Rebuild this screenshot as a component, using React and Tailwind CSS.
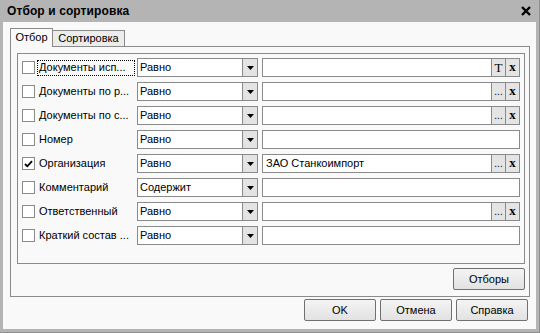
import React from 'react';

const rows = [
  { label: 'Документы исп...', op: 'Равно', buttons: ['T', 'x'], focus: true },
  { label: 'Документы по р...', op: 'Равно', buttons: ['...', 'x'] },
  { label: 'Документы по с...', op: 'Равно', buttons: ['...', 'x'] },
  { label: 'Номер', op: 'Равно' },
  { label: 'Организация', op: 'Равно', checked: true, value: 'ЗАО Станкоимпорт', buttons: ['...', 'x'] },
  { label: 'Комментарий', op: 'Содержит' },
  { label: 'Ответственный', op: 'Равно', buttons: ['...', 'x'] },
  { label: 'Краткий состав ...', op: 'Равно' },
];

function Checkbox({ checked }) {
  return (
    <div className="w-[13px] h-[13px] border border-[#8a8a8a] bg-white flex items-center justify-center shrink-0">
      {checked && (
        <svg width="9" height="8" viewBox="0 0 9 8">
          <path d="M1 4 L3.3 6.3 L8 1.2" fill="none" stroke="#000" strokeWidth="1.8" />
        </svg>
      )}
    </div>
  );
}

function FieldButton({ kind }) {
  if (kind === 'T') {
    return (
      <div className="w-[14px] h-full border-l border-[#8a8a8a] bg-[#e4e4e4] flex items-center justify-center font-['Liberation_Serif',serif] text-[13px] leading-none">
        T
      </div>
    );
  }
  if (kind === 'x') {
    return (
      <div className="w-[14px] h-full border-l border-[#8a8a8a] bg-[#e4e4e4] flex items-center justify-center font-['Liberation_Serif',serif] font-bold text-[13px] leading-none pb-[2px]">
        x
      </div>
    );
  }
  return (
    <div className="w-[14px] h-full border-l border-[#8a8a8a] bg-[#e4e4e4] flex items-end justify-center text-[10px] leading-none pb-[3px]">
      ...
    </div>
  );
}

function Row({ row }) {
  return (
    <div className="flex items-center h-[19px]">
      <Checkbox checked={row.checked} />
      <div
        className={`ml-[2px] w-[98px] h-[16px] flex items-center pl-[1px] whitespace-nowrap ${
          row.focus ? 'border border-dotted border-black' : 'border border-transparent'
        }`}
      >
        {row.label}
      </div>
      <div className="ml-[2px] w-[121px] h-[19px] border border-[#8a8a8a] bg-white flex">
        <div className="flex-1 flex items-center pl-[2px]">{row.op}</div>
        <div className="w-[15px] h-full border-l border-[#8a8a8a] bg-[#e3e3e3] flex items-center justify-center">
          <svg width="7" height="4" viewBox="0 0 7 4">
            <path d="M0 0 H7 L3.5 4 Z" fill="#000" />
          </svg>
        </div>
      </div>
      <div className="ml-[4px] w-[258px] h-[19px] border border-[#8a8a8a] bg-white flex">
        <div className="flex-1 flex items-center pl-[3px] whitespace-nowrap">{row.value}</div>
        {row.buttons && row.buttons.map((b, i) => <FieldButton key={i} kind={b} />)}
      </div>
    </div>
  );
}

function Button({ children, className = '' }) {
  return (
    <div
      className={`h-[22px] border border-[#707070] rounded-[2px] bg-gradient-to-b from-[#f4f4f4] to-[#e2e2e2] flex items-center justify-center ${className}`}
    >
      {children}
    </div>
  );
}

export default function App() {
  return (
    <div className="w-[540px] h-[333px] bg-[#b4b4b4] flex flex-col px-[3px] pb-[3px] border-r border-b border-[#8f8f8f] font-['Liberation_Sans',Arial,sans-serif] text-[11px] text-black select-none">
      {/* Title bar */}
      <div className="h-[22px] shrink-0 flex items-center justify-between pl-[4px] pr-[5px]">
        <span className="font-bold text-[12px] tracking-[0.1px]">Отбор и сортировка</span>
        <svg width="10" height="10" viewBox="0 0 10 10">
          <path d="M1 1 L9 9 M9 1 L1 9" stroke="#000" strokeWidth="2.4" />
        </svg>
      </div>

      {/* Body */}
      <div className="flex-1 bg-[#f9f9f9] flex flex-col pt-[6px] pl-[7px] pr-[8px]">
        {/* Tabs */}
        <div className="flex items-end h-[18px]">
          <div className="relative z-10 -mb-px h-[19px] w-[43px] bg-[#f9f9f9] border-l border-t border-r border-[#8a8a8a] flex items-center justify-center pb-[1px]">
            Отбор
          </div>
          <div className="h-[16px] w-[72px] bg-[#ececec] border-t border-r border-[#8a8a8a] flex items-center justify-center">
            Сортировка
          </div>
        </div>

        {/* Tab panel */}
        <div className="w-[520px] h-[251px] border border-[#8a8a8a] flex flex-col pt-[6px] pl-[6px]">
          <div className="w-[508px] h-[211px] border border-[#8a8a8a] flex flex-col gap-[5px] pt-[4px] pl-[4px]">
            {rows.map((row, i) => (
              <Row key={i} row={row} />
            ))}
          </div>
          <div className="w-[508px] flex justify-end mt-[4px]">
            <Button className="w-[72px]">Отборы</Button>
          </div>
        </div>

        {/* Bottom buttons */}
        <div className="flex justify-end gap-[4px] mt-[2px]">
          <Button className="w-[72px]">OK</Button>
          <Button className="w-[72px]">Отмена</Button>
          <Button className="w-[72px]">Справка</Button>
        </div>
      </div>
    </div>
  );
}
